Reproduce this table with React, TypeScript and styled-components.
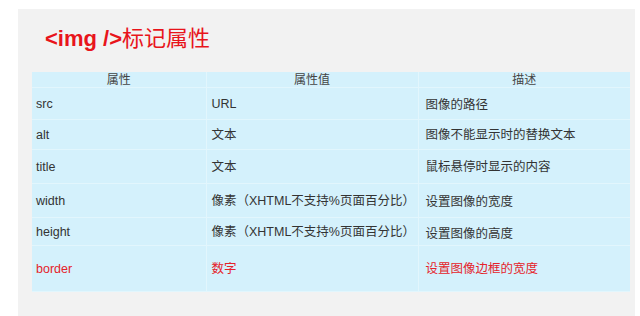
import React from "react";
import styled, { createGlobalStyle } from "styled-components";

const GlobalStyle = createGlobalStyle`
  html, body {
    margin: 0;
    padding: 0;
    background: #ffffff;
    font-family: "Liberation Sans", "Noto Sans CJK SC", sans-serif;
  }
`;

interface Row {
  name: string;
  value: string;
  desc: string;
  height: number;
  highlight?: boolean;
  descOffset?: number;
}

const rows: Row[] = [
  { name: "src", value: "URL", desc: "图像的路径", height: 32, descOffset: 2 },
  { name: "alt", value: "文本", desc: "图像不能显示时的替换文本", height: 30 },
  { name: "title", value: "文本", desc: "鼠标悬停时显示的内容", height: 34 },
  { name: "width", value: "像素（XHTML不支持%页面百分比）", desc: "设置图像的宽度", height: 34, descOffset: 3 },
  { name: "height", value: "像素（XHTML不支持%页面百分比）", desc: "设置图像的高度", height: 28, descOffset: 4 },
  { name: "border", value: "数字", desc: "设置图像边框的宽度", height: 46, highlight: true },
];

const App = () => {
  return (
    <>
      <GlobalStyle />
      <Page>
        <Slide>
          <Title>
            <TagPart>&lt;img /&gt;</TagPart>标记属性
          </Title>
          <Table>
            <colgroup>
              <col style={{ width: 174 }} />
              <col style={{ width: 212 }} />
              <col style={{ width: 212 }} />
            </colgroup>
            <thead>
              <tr>
                <HeadCell>属性</HeadCell>
                <HeadCell>属性值</HeadCell>
                <HeadCell>描述</HeadCell>
              </tr>
            </thead>
            <tbody>
              {rows.map((r) => (
                <tr key={r.name} style={{ height: r.height }}>
                  <Cell highlight={r.highlight} pad={4}>
                    {r.name}
                  </Cell>
                  <Cell highlight={r.highlight} pad={5}>
                    {r.value}
                  </Cell>
                  <Cell highlight={r.highlight} pad={7} offset={r.descOffset}>
                    {r.desc}
                  </Cell>
                </tr>
              ))}
            </tbody>
          </Table>
        </Slide>
      </Page>
    </>
  );
};

export default App;

const Page = styled.div`
  width: 640px;
  height: 316px;
  overflow: hidden;
  padding: 9px 5px 0 18px;
  box-sizing: border-box;
`;

const Slide = styled.div`
  background: #f2f2f2;
  height: 307px;
  padding: 17px 0 0 14px;
  box-sizing: border-box;
`;

const Title = styled.div`
  margin-left: 13px;
  font-size: 22px;
  line-height: 26px;
  height: 26px;
  color: #e8141b;
  font-family: "Liberation Sans", "Noto Sans CJK SC", sans-serif;
`;

const TagPart = styled.span`
  font-weight: 700;
`;

const Table = styled.table`
  margin-top: 20px;
  width: 598px;
  border-collapse: collapse;
  table-layout: fixed;
  background: #d4f1fc;
  font-size: 12.5px;
  color: #333333;
`;

const HeadCell = styled.th`
  height: 15px;
  padding: 0;
  font-weight: 400;
  font-size: 12px;
  line-height: 14px;
  text-align: center;
  color: #444444;
  border-right: 1px solid #e2f6fd;
  border-bottom: 1px solid #e2f6fd;
  &:last-child {
    border-right: none;
  }
`;

const Cell = styled.td<{ highlight?: boolean; pad: number; offset?: number }>`
  padding: ${(p) => p.offset ?? 0}px 0 0 ${(p) => p.pad}px;
  line-height: 14px;
  vertical-align: middle;
  white-space: nowrap;
  color: ${(p) => (p.highlight ? "#e5232a" : "#333333")};
  border-right: 1px solid #e2f6fd;
  border-bottom: 1px solid #e2f6fd;
  &:last-child {
    border-right: none;
  }
`;
